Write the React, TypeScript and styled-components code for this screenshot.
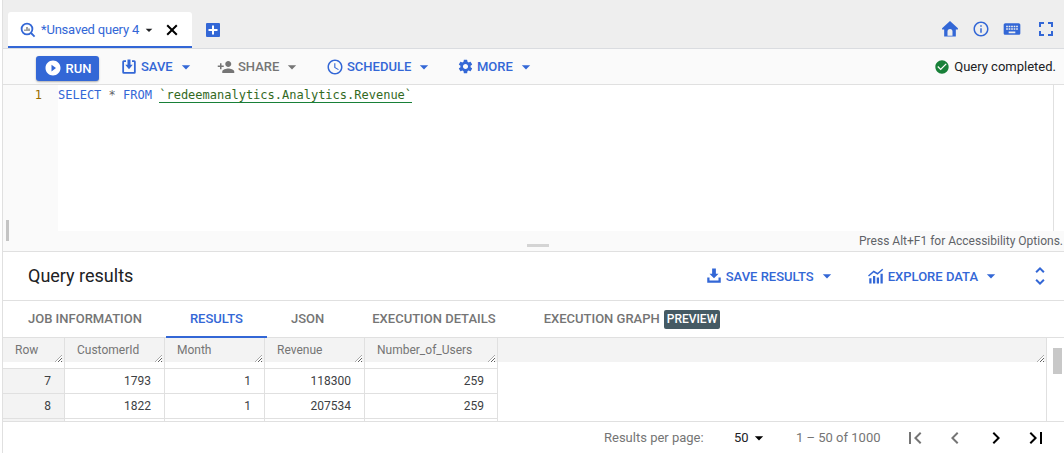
import React from "react";
import styled, { createGlobalStyle } from "styled-components";
import {
  MdArrowDropDown,
  MdCheckCircle,
  MdChevronLeft,
  MdChevronRight,
  MdFirstPage,
  MdFullscreen,
  MdInfoOutline,
  MdKeyboard,
  MdLastPage,
  MdPersonAdd,
  MdPlayCircleFilled,
  MdSchedule,
  MdSettings,
  MdUnfoldMore,
} from "react-icons/md";

const BLUE = "#3367d6";
const GREY = "#757575";

const columns = [
  { name: "Row", width: 62 },
  { name: "CustomerId", width: 100 },
  { name: "Month", width: 100 },
  { name: "Revenue", width: 100 },
  { name: "Number_of_Users", width: 133 },
];

const rows = [
  ["7", "1793", "1", "118300", "259"],
  ["8", "1822", "1", "207534", "259"],
];

const tabs = ["JOB INFORMATION", "RESULTS", "JSON", "EXECUTION DETAILS", "EXECUTION GRAPH"];

const SaveIcon = () => (
  <svg width="18" height="18" viewBox="0 0 24 24" fill="currentColor">
    <path d="M5 3h3v2.4H5.4v13.2h13.2V5.4H16V3h3a2 2 0 0 1 2 2v14a2 2 0 0 1-2 2H5a2 2 0 0 1-2-2V5a2 2 0 0 1 2-2z" />
    <path d="M10 2h4v7h3l-5 6-5-6h3z" />
  </svg>
);

const DownloadIcon = () => (
  <svg width="18" height="18" viewBox="0 0 24 24" fill="currentColor">
    <path d="M9.5 2h5v7H18l-6 6-6-6h3.5z" />
    <path d="M3 14h3v4h12v-4h3v7H3z" />
  </svg>
);

const ExploreIcon = () => (
  <svg width="18" height="18" viewBox="0 0 24 24" fill="currentColor">
    <path d="M3 15h3v7H3zM8 12h3v10H8zM13 14h3v8h-3zM18 9h3v13h-3z" />
    <path d="M2 12l7-6 5 3 7-6" fill="none" stroke="currentColor" strokeWidth="2" />
  </svg>
);

const HomeIcon = () => (
  <svg width="20" height="20" viewBox="0 0 24 24" fill={BLUE}>
    <path
      fillRule="evenodd"
      d="M12 2.500L2.500 11v1.500H5V21h14v-8.500h2.500V11zM9 20v-5a3 3 0 0 1 6 0v5z"
    />
  </svg>
);

const CloseIcon = () => (
  <CloseSvg width="12" height="12" viewBox="0 0 12 12">
    <path d="M1.200 1.200l9.600 9.600M10.800 1.200l-9.600 9.600" stroke="#000" strokeWidth="2" />
  </CloseSvg>
);

const PlusIcon = () => (
  <svg width="10" height="10" viewBox="0 0 10 10">
    <path d="M5 .5v9M.5 5h9" stroke="#fff" strokeWidth="2" />
  </svg>
);

const App = () => {
  return (
    <Page>
      <GlobalStyle />
      <TabBar>
        <QueryTab>
          <TabIcon viewBox="0 0 16 16">
            <circle cx="7" cy="7" r="5.4" fill="none" stroke={BLUE} strokeWidth="1.8" />
            <path d="M5 9V7.500M7 9V5M9 9V6.500" stroke="#5f6368" strokeWidth="1.2" />
            <path d="M11 11l3.600 3.600" stroke={BLUE} strokeWidth="1.8" />
          </TabIcon>
          <TabTitle>*Unsaved query 4</TabTitle>
          <MdArrowDropDown size={16} color="#202124" />
          <CloseIcon />
        </QueryTab>
        <NewTab>
          <PlusIcon />
        </NewTab>
        <TopIcons>
          <HomeIcon />
          <MdInfoOutline size={18} color={BLUE} />
          <MdKeyboard size={20} color={BLUE} />
          <MdFullscreen size={24} color={BLUE} />
        </TopIcons>
      </TabBar>

      <Toolbar>
        <RunButton>
          <MdPlayCircleFilled size={18} />
          RUN
        </RunButton>
        <ToolButton $width={97}>
          <SaveIcon />
          SAVE
          <MdArrowDropDown size={20} />
        </ToolButton>
        <ToolButton $width={109} $muted>
          <MdPersonAdd size={18} />
          SHARE
          <MdArrowDropDown size={20} />
        </ToolButton>
        <ToolButton $width={131}>
          <MdSchedule size={18} />
          SCHEDULE
          <MdArrowDropDown size={20} />
        </ToolButton>
        <ToolButton $width={90}>
          <MdSettings size={17} />
          MORE
          <MdArrowDropDown size={20} />
        </ToolButton>
        <Status>
          <MdCheckCircle size={16} color="#188038" />
          Query completed.
        </Status>
      </Toolbar>

      <Editor>
        <Gutter>1</Gutter>
        <Code>
          <Keyword>SELECT</Keyword> <Operator>*</Operator> <Keyword>FROM</Keyword>{" "}
          <TableName>`redeemanalytics.Analytics.Revenue`</TableName>
        </Code>
        <EditorScroll />
      </Editor>

      <EditorFooter>
        <GrabBar />
        <Resizer />
        Press Alt+F1 for Accessibility Options.
      </EditorFooter>

      <ResultsHeader>
        <ResultsTitle>Query results</ResultsTitle>
        <HeaderAction $gap={30}>
          <DownloadIcon />
          SAVE RESULTS
          <MdArrowDropDown size={20} />
        </HeaderAction>
        <HeaderAction $gap={27}>
          <ExploreIcon />
          EXPLORE DATA
          <MdArrowDropDown size={20} />
        </HeaderAction>
        <MdUnfoldMore size={24} color={BLUE} />
      </ResultsHeader>

      <TabsRow>
        {tabs.map((tab) => (
          <ResultTab key={tab} $active={tab === "RESULTS"}>
            {tab}
          </ResultTab>
        ))}
        <PreviewBadge>PREVIEW</PreviewBadge>
      </TabsRow>

      <TableArea>
        <TableScroll>
          <HeaderRow>
            {columns.map((col) => (
              <HeaderCell key={col.name} $width={col.width}>
                {col.name}
                <ResizeGrip />
              </HeaderCell>
            ))}
            <HeaderFill>
              <ResizeGrip />
            </HeaderFill>
          </HeaderRow>
          {rows.map((row) => (
            <DataRow key={row[0]}>
              {row.map((value, i) => (
                <DataCell key={i} $width={columns[i].width} $rowNum={i === 0}>
                  {value}
                </DataCell>
              ))}
            </DataRow>
          ))}
          <CutRow>
            {columns.map((col, i) => (
              <CutCell key={col.name} $width={col.width} $rowNum={i === 0} />
            ))}
          </CutRow>
        </TableScroll>
        <ScrollTrack>
          <ScrollThumb />
        </ScrollTrack>
      </TableArea>

      <Paginator>
        <PerPageLabel>Results per page:</PerPageLabel>
        <PerPageValue>
          50
          <MdArrowDropDown size={20} color="#000" />
        </PerPageValue>
        <PageRange>1 – 50 of 1000</PageRange>
        <PageButtons>
          <MdFirstPage size={24} color={GREY} />
          <MdChevronLeft size={24} color={GREY} />
          <MdChevronRight size={24} color="#000" />
          <MdLastPage size={24} color="#000" />
        </PageButtons>
      </Paginator>
    </Page>
  );
};

const GlobalStyle = createGlobalStyle`
  html, body {
    margin: 0;
    padding: 0;
    background: #fff;
  }
  body {
    font-family: Roboto, "Liberation Sans", sans-serif;
    overflow: hidden;
  }
  svg {
    flex-shrink: 0;
  }
`;

const Page = styled.div`
  width: 1064px;
  height: 453px;
  overflow: hidden;
  border-left: 1px solid #e0e0e0;
  margin-left: 2px;
  margin-right: -3px;
  box-sizing: border-box;
  display: flex;
  flex-direction: column;
`;

const TabBar = styled.div`
  height: 49px;
  flex: none;
  box-sizing: border-box;
  background: #eeeeee;
  border-bottom: 1px solid #dadce0;
  margin-left: -3px;
  padding: 12px 0 0 8px;
  display: flex;
  align-items: flex-start;
`;

const QueryTab = styled.div`
  width: 184px;
  height: 36px;
  flex: none;
  box-sizing: border-box;
  background: #fff;
  border-radius: 3px 3px 0 0;
  border-bottom: 2px solid ${BLUE};
  padding: 1px 0 0 12px;
  display: flex;
  align-items: center;
`;

const TabIcon = styled.svg`
  width: 16px;
  height: 16px;
  margin-right: 5px;
  flex: none;
`;

const TabTitle = styled.span`
  font-size: 13px;
  letter-spacing: -0.2px;
  color: ${BLUE};
  margin-right: 2px;
  white-space: nowrap;
`;

const CloseSvg = styled.svg`
  margin-left: 9px;
`;

const NewTab = styled.div`
  width: 14px;
  height: 14px;
  margin: 11px 0 0 14px;
  background: ${BLUE};
  border-radius: 1px;
  display: flex;
  align-items: center;
  justify-content: center;
`;

const TopIcons = styled.div`
  margin: 5px 8px 0 auto;
  width: 118px;
  height: 24px;
  display: flex;
  align-items: center;
  justify-content: space-between;
`;

const Toolbar = styled.div`
  height: 36px;
  flex: none;
  background: #fafafa;
  border-bottom: 1px solid #e0e0e0;
  box-sizing: border-box;
  padding-left: 33px;
  display: flex;
  align-items: center;
`;

const RunButton = styled.div`
  width: 63px;
  height: 25px;
  flex: none;
  margin: 3px 21px 0 0;
  background: ${BLUE};
  color: #fff;
  border-radius: 3px;
  box-shadow: 0 1px 2px rgba(0, 0, 0, 0.3);
  font-size: 13px;
  font-weight: 500;
  display: flex;
  align-items: center;
  justify-content: center;
  gap: 4px;
`;

const ToolButton = styled.div<{ $width: number; $muted?: boolean }>`
  width: ${(p) => p.$width}px;
  flex: none;
  color: ${(p) => (p.$muted ? GREY : BLUE)};
  font-size: 13px;
  font-weight: 500;
  display: flex;
  align-items: center;
  gap: 3px;
`;

const Status = styled.div`
  margin-left: auto;
  margin-right: 10px;
  font-size: 13px;
  color: #202124;
  display: flex;
  align-items: center;
  gap: 4px;
`;

const Editor = styled.div`
  height: 146px;
  flex: none;
  display: flex;
  background: #fff;
`;

const Gutter = styled.div`
  width: 55px;
  flex: none;
  box-sizing: border-box;
  background: #fafafa;
  padding: 3px 16px 0 0;
  text-align: right;
  font-family: "DejaVu Sans Mono", "Liberation Mono", monospace;
  font-size: 12px;
  color: #996b00;
`;

const Code = styled.div`
  flex: 1;
  padding-top: 2px;
  font-family: "DejaVu Sans Mono", "Liberation Mono", monospace;
  font-size: 12px;
  line-height: 16px;
  white-space: pre;
  color: #3c4043;
`;

const Keyword = styled.span`
  color: #3367d6;
`;

const Operator = styled.span`
  color: #5f6368;
`;

const TableName = styled.span`
  color: #33691e;
  border-bottom: 1px solid #188038;
`;

const EditorScroll = styled.div`
  width: 12px;
  flex: none;
  border-left: 1px solid #e0e0e0;
`;

const EditorFooter = styled.div`
  position: relative;
  height: 21px;
  flex: none;
  box-sizing: border-box;
  background: #fafafa;
  border-bottom: 1px solid #e0e0e0;
  padding-right: 3px;
  font-size: 12px;
  line-height: 20px;
  color: #5f6368;
  text-align: right;
`;

const GrabBar = styled.span`
  position: absolute;
  left: 3px;
  top: -11px;
  width: 3px;
  height: 21px;
  background: #c4c4c4;
`;

const Resizer = styled.span`
  position: absolute;
  left: 524px;
  top: 13px;
  width: 22px;
  height: 3px;
  background: #d4d4d4;
`;

const ResultsHeader = styled.div`
  height: 49px;
  flex: none;
  box-sizing: border-box;
  border-bottom: 1px solid #e0e0e0;
  padding: 0 14px 0 25px;
  display: flex;
  align-items: center;
`;

const ResultsTitle = styled.div`
  font-size: 18px;
  color: #202124;
  margin: 0 auto 2px 0;
`;

const HeaderAction = styled.div<{ $gap: number }>`
  color: ${BLUE};
  font-size: 13px;
  font-weight: 500;
  display: flex;
  align-items: center;
  gap: 3px;
  margin-right: ${(p) => p.$gap}px;
`;

const TabsRow = styled.div`
  height: 37px;
  flex: none;
  box-sizing: border-box;
  border-bottom: 1px solid #e0e0e0;
  padding-left: 25px;
  display: flex;
  align-items: stretch;
`;

const ResultTab = styled.span<{ $active?: boolean }>`
  display: flex;
  align-items: center;
  box-sizing: border-box;
  padding: 0 24px;
  font-size: 13px;
  font-weight: 500;
  color: ${(p) => (p.$active ? BLUE : GREY)};
  border-bottom: 2px solid ${(p) => (p.$active ? BLUE : "transparent")};
  margin-bottom: -1px;

  &:first-child {
    padding-left: 0;
  }

  &:last-of-type {
    padding-right: 4px;
  }
`;

const PreviewBadge = styled.div`
  align-self: center;
  background: #455a64;
  color: #fff;
  border-radius: 2px;
  font-size: 12px;
  font-weight: 500;
  line-height: 19px;
  padding: 0 3px;
`;

const TableArea = styled.div`
  height: 84px;
  flex: none;
  display: flex;
  border-bottom: 1px solid #e0e0e0;
  box-sizing: border-box;
`;

const TableScroll = styled.div`
  flex: none;
  width: 1044px;
  border-right: 1px solid #e0e0e0;
  box-sizing: border-box;
`;

const HeaderRow = styled.div`
  height: 30px;
  display: flex;
`;

const HeaderCell = styled.div<{ $width: number }>`
  position: relative;
  width: ${(p) => p.$width}px;
  flex: none;
  height: 30px;
  box-sizing: border-box;
  border-right: 1px solid #e0e0e0;
  padding: 5px 12px 0 12px;
  font-size: 12px;
  color: ${GREY};
  background: linear-gradient(#f3f3f3 24px, #fff 24px);
`;

const HeaderFill = styled.div`
  position: relative;
  flex: 1;
  height: 24px;
  background: #f3f3f3;
`;

const ResizeGrip = styled.span`
  position: absolute;
  right: 2px;
  top: 17px;
  width: 7px;
  height: 7px;
  background: repeating-linear-gradient(
    135deg,
    #fff 0 1.5px,
    #616161 1.5px 2.5px
  );
  clip-path: polygon(100% 0, 100% 100%, 0 100%);
`;

const DataRow = styled.div`
  height: 25px;
  display: flex;
  box-sizing: border-box;
`;

const DataCell = styled.div<{ $width: number; $rowNum?: boolean }>`
  width: ${(p) => p.$width}px;
  flex: none;
  box-sizing: border-box;
  border-right: 1px solid #e0e0e0;
  border-top: 1px solid #e0e0e0;
  padding-right: 13px;
  background: ${(p) => (p.$rowNum ? "#f3f3f3" : "#fff")};
  text-align: right;
  font-size: 12px;
  line-height: 24px;
  color: #3c4043;
`;

const CutRow = styled.div`
  height: 3px;
  display: flex;
`;

const CutCell = styled.div<{ $width: number; $rowNum?: boolean }>`
  width: ${(p) => p.$width}px;
  flex: none;
  box-sizing: border-box;
  border-right: 1px solid #e0e0e0;
  border-top: 1px solid #e0e0e0;
  background: ${(p) => (p.$rowNum ? "#f3f3f3" : "#fff")};
`;

const ScrollTrack = styled.div`
  flex: 1;
  background: #fff;
  padding: 10px 0 0 6px;
`;

const ScrollThumb = styled.div`
  width: 9px;
  height: 26px;
  background: #c8c8c8;
`;

const Paginator = styled.div`
  height: 31px;
  flex: none;
  display: flex;
  align-items: center;
  font-size: 13px;
  padding-left: 601px;
`;

const PerPageLabel = styled.span`
  color: ${GREY};
  width: 130px;
  flex: none;
`;

const PerPageValue = styled.span`
  width: 62px;
  flex: none;
  color: #202124;
  display: flex;
  align-items: center;
`;

const PageRange = styled.span`
  width: 107px;
  flex: none;
  color: ${GREY};
`;

const PageButtons = styled.div`
  width: 145px;
  flex: none;
  display: flex;
  justify-content: space-between;
`;

export default App;
